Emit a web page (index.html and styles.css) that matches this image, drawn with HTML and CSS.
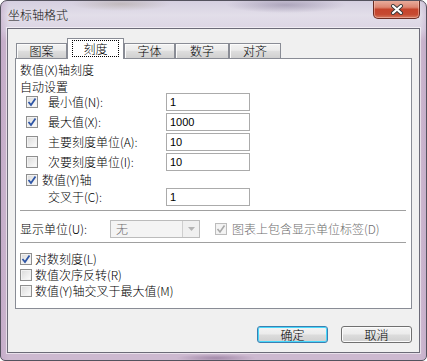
FILE: index.html
```html
<!DOCTYPE html>
<html lang="zh-CN">
<head>
<meta charset="utf-8">
<title>坐标轴格式</title>
<link rel="stylesheet" href="styles.css">
</head>
<body>
<div class="window">
  <div class="titlebar">
    <span class="title">坐标轴格式</span>
    <span class="close">
      <svg width="14" height="11" viewBox="0 0 14 11"><path d="M3 2 L11 9 M11 2 L3 9" stroke="#3a3a3a" stroke-width="4" stroke-linecap="round" fill="none"/><path d="M3 2 L11 9 M11 2 L3 9" stroke="#ffffff" stroke-width="2.2" stroke-linecap="round" fill="none"/></svg>
    </span>
  </div>
  <div class="client">
    <div class="tabs">
      <div class="tab w1">图案</div>
      <div class="tab sel"><span class="focus">刻度</span></div>
      <div class="tab w3">字体</div>
      <div class="tab w4">数字</div>
      <div class="tab w5">对齐</div>
    </div>
    <div class="pane">
      <div class="heading">数值(X)轴刻度</div>
      <div class="heading sub">自动设置</div>
      <div class="fields">
        <div class="frow">
          <span class="cb"><svg width="10" height="10" viewBox="0 0 10 10"><path d="M1.5 5 L4 8 L8.5 1.5" stroke="#2f56a6" stroke-width="1.8" fill="none"/></svg></span>
          <span class="flabel">最小值(N):</span>
          <span class="input">1</span>
        </div>
        <div class="frow">
          <span class="cb"><svg width="10" height="10" viewBox="0 0 10 10"><path d="M1.5 5 L4 8 L8.5 1.5" stroke="#2f56a6" stroke-width="1.8" fill="none"/></svg></span>
          <span class="flabel">最大值(X):</span>
          <span class="input">1000</span>
        </div>
        <div class="frow">
          <span class="cb"></span>
          <span class="flabel">主要刻度单位(A):</span>
          <span class="input">10</span>
        </div>
        <div class="frow">
          <span class="cb"></span>
          <span class="flabel">次要刻度单位(I):</span>
          <span class="input">10</span>
        </div>
        <div class="frow yrow">
          <span class="cb"><svg width="10" height="10" viewBox="0 0 10 10"><path d="M1.5 5 L4 8 L8.5 1.5" stroke="#2f56a6" stroke-width="1.8" fill="none"/></svg></span>
          <span class="ylabel">数值(Y)轴</span>
        </div>
        <div class="frow">
          <span class="flabel cross">交叉于(C):</span>
          <span class="input">1</span>
        </div>
      </div>
      <div class="sep"></div>
      <div class="unitrow">
        <span class="ulabel">显示单位(U):</span>
        <span class="combo"><span class="ctext">无</span><span class="cbtn"><svg width="7" height="4" viewBox="0 0 7 4"><path d="M0 0 H7 L3.5 4 Z" fill="#b4b4b4"/></svg></span></span>
        <span class="cb dis"><svg width="10" height="10" viewBox="0 0 10 10"><path d="M1.5 5 L4 8 L8.5 1.5" stroke="#a9a9a9" stroke-width="1.6" fill="none"/></svg></span>
        <span class="dlabel">图表上包含显示单位标签(D)</span>
      </div>
      <div class="sep sep2"></div>
      <div class="checks">
        <div class="crow">
          <span class="cb"><svg width="10" height="10" viewBox="0 0 10 10"><path d="M1.5 5 L4 8 L8.5 1.5" stroke="#2f56a6" stroke-width="1.8" fill="none"/></svg></span>
          <span class="clabel">对数刻度(L)</span>
        </div>
        <div class="crow">
          <span class="cb"></span>
          <span class="clabel">数值次序反转(R)</span>
        </div>
        <div class="crow">
          <span class="cb"></span>
          <span class="clabel">数值(Y)轴交叉于最大值(M)</span>
        </div>
      </div>
    </div>
    <div class="buttons">
      <span class="btn default">确定</span>
      <span class="btn">取消</span>
    </div>
  </div>
</div>
</body>
</html>
```

FILE: styles.css
```css
* { box-sizing: border-box; }
html, body { margin: 0; padding: 0; }
body {
  width: 427px;
  height: 361px;
  overflow: hidden;
  background: #ffffff;
  font-family: "Noto Sans CJK SC", sans-serif;
  font-weight: 300;
  font-size: 12px;
  color: #000;
}
.window {
  width: 427px;
  height: 361px;
  display: flex;
  flex-direction: column;
  border: 1px solid #54525e;
  border-radius: 7px 7px 5px 5px;
  overflow: hidden;
  background:
    radial-gradient(ellipse 60px 8px at 285px 4px, rgba(120,110,140,0.45), rgba(120,110,140,0)),
    radial-gradient(ellipse 50px 7px at 120px 3px, rgba(150,140,120,0.35), rgba(150,140,120,0)),
    radial-gradient(ellipse 40px 4px at 215px 357px, rgba(120,90,130,0.5), rgba(120,90,130,0)),
    linear-gradient(to right, rgba(190,160,195,0.5) 0px, rgba(190,160,195,0) 8px, rgba(190,160,195,0) 419px, rgba(190,160,195,0.5) 427px),
    linear-gradient(to bottom, #d5cfe0 0px, #e2dee9 14px, #dcd5e4 28px, #cbb7ce 40px, #cdb9d0 100%);
}
.titlebar {
  height: 27px;
  display: flex;
  align-items: flex-start;
  padding-left: 7px;
}
.title {
  margin-top: 6px;
  line-height: 16px;
  color: #111;
  flex: 1;
}
.close {
  width: 47px;
  height: 19px;
  margin-top: -1px;
  margin-right: 6px;
  display: flex;
  align-items: center;
  justify-content: center;
  border: 1px solid #6b2c22;
  border-top: none;
  border-radius: 0 0 5px 5px;
  background: linear-gradient(to bottom, #eab2a2 0%, #dd8672 40%, #c5442c 52%, #c64a31 80%, #d47a60 100%);
  box-shadow: inset 0 0 0 1px rgba(255,210,200,0.45);
}
.client {
  height: 325px;
  margin: 0 6px;
  border: 1px solid #6c6b78;
  box-shadow: 0 0 0 1px rgba(255,255,255,0.55);
  background: #f0f0f0;
  padding: 9px 7px 0 7px;
  display: flex;
  flex-direction: column;
}
.tabs {
  display: flex;
  align-items: flex-end;
  height: 20px;
  margin-left: 1px;
}
.tab {
  height: 15px;
  line-height: 14px;
  text-align: center;
  border: 1px solid #898c95;
  border-bottom: none;
  background: linear-gradient(to bottom, #f3f3f3 0%, #ebebeb 45%, #dedede 50%, #d0d0d0 100%);
  box-shadow: inset 1px 1px 0 #fbfbfb;
}
.w1 { width: 51px; }
.w3 { width: 51px; }
.w4 { width: 54px; }
.w5 { width: 52px; }
.tab.sel {
  width: 57px;
  height: 21px;
  margin-bottom: -1px;
  position: relative;
  z-index: 1;
  background: #ffffff;
  box-shadow: none;
  display: flex;
  justify-content: center;
  padding-top: 1px;
}
.focus {
  width: 47px;
  height: 17px;
  line-height: 15px;
  border: 1px dotted #000;
}
.pane {
  width: 397px;
  height: 251px;
  border: 1px solid #898c95;
  background: #ffffff;
  display: flex;
  flex-direction: column;
}
.heading {
  padding-left: 4px;
  line-height: 17px;
  height: 17px;
}
.heading:first-child { margin-top: 2px; }
.heading.sub { height: 15px; }
.fields {
  display: flex;
  flex-direction: column;
  gap: 2px;
}
.frow {
  height: 18px;
  display: flex;
  align-items: center;
}
.frow.yrow { height: 13px; }
.cb {
  width: 12px;
  height: 12px;
  flex: none;
  border: 1px solid #8f8f8f;
  background: linear-gradient(135deg, #dadada 0%, #f6f6f6 80%, #ffffff 100%);
  box-shadow: inset 0 0 0 1px #f2f2f2;
  display: flex;
  align-items: center;
  justify-content: center;
}
.cb.dis {
  border-color: #bcbcbc;
  background: #f4f4f4;
}
.frow .cb { margin-left: 10px; }
.flabel {
  margin-left: 10px;
  width: 118px;
  line-height: 16px;
}
.flabel.cross { margin-left: 32px; }
.ylabel {
  margin-left: 4px;
  line-height: 13px;
}
.input {
  width: 84px;
  height: 18px;
  border: 1px solid #ababab;
  background: #fff;
  font-family: "Liberation Sans", Arial, sans-serif;
  font-weight: 400;
  font-size: 11px;
  line-height: 16px;
  padding-left: 3px;
}
.sep {
  height: 1px;
  background: #a0a0a0;
  margin: 4px 5px 0 4px;
}
.unitrow {
  margin-top: 9px;
  height: 18px;
  display: flex;
  align-items: center;
}
.ulabel {
  padding-left: 4px;
  width: 94px;
  line-height: 16px;
}
.combo {
  width: 90px;
  height: 18px;
  border: 1px solid #bcbcbc;
  background: #f4f4f4;
  display: flex;
}
.ctext {
  flex: 1;
  color: #6d6d6d;
  line-height: 16px;
  padding-left: 5px;
}
.cbtn {
  width: 17px;
  border-left: 1px solid #cfcfcf;
  background: #f0f0f0;
  display: flex;
  align-items: center;
  justify-content: center;
}
.unitrow .cb { margin-left: 15px; }
.dlabel {
  margin-left: 5px;
  color: #6d6d6d;
  line-height: 16px;
}
.checks {
  margin-top: 8px;
  display: flex;
  flex-direction: column;
}
.crow {
  height: 16px;
  display: flex;
  align-items: center;
}
.crow .cb { margin-left: 4px; }
.clabel {
  margin-left: 3px;
  line-height: 16px;
}
.buttons {
  margin-top: 17px;
  display: flex;
  justify-content: flex-end;
  gap: 13px;
}
.btn {
  width: 71px;
  height: 17px;
  border: 1px solid #707070;
  border-radius: 3px;
  background: linear-gradient(to bottom, #f4f4f4 0%, #ebebeb 48%, #dcdcdc 52%, #d0d0d0 100%);
  box-shadow: inset 0 0 0 1px #fbfbfb;
  text-align: center;
  line-height: 15px;
}
.btn.default {
  border-color: #3c7fb1;
  box-shadow: inset 0 0 0 1px #48d8fb;
}
```
